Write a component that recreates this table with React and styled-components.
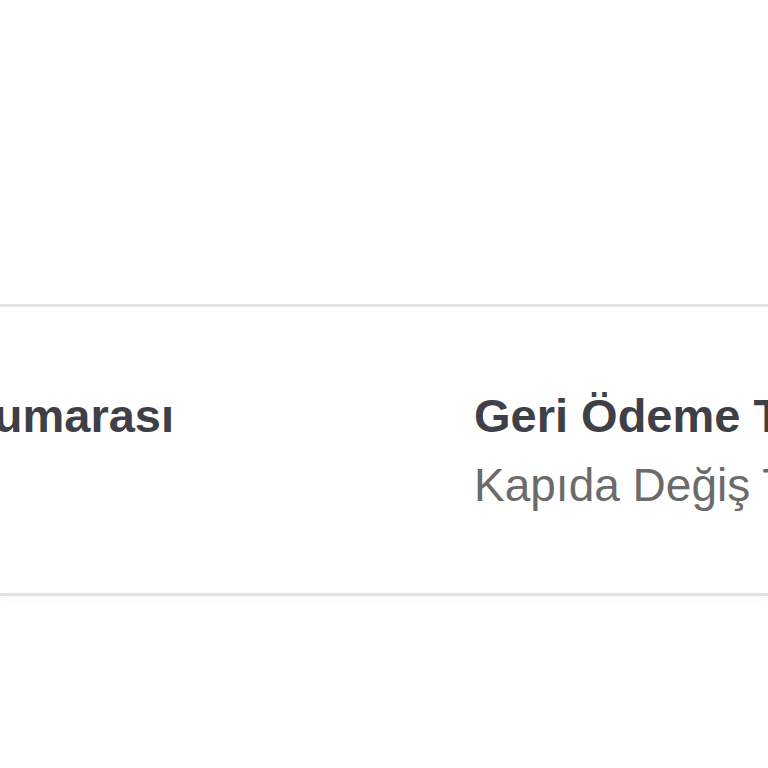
import React from "react";
import styled, { createGlobalStyle } from "styled-components";

const GlobalStyle = createGlobalStyle`
  html, body {
    margin: 0;
    padding: 0;
    background: #ffffff;
    overflow: hidden;
  }
`;

const Page = styled.div`
  width: 768px;
  height: 768px;
  padding-top: 304px;
  box-sizing: border-box;
  overflow: hidden;
  font-family: "Liberation Sans", Arial, sans-serif;
`;

const Row = styled.div`
  border-top: 3px solid #e3e3e3;
  border-bottom: 3px solid #e1e1e1;
  box-shadow: 0 3px 6px rgba(0, 0, 0, 0.03);
  padding: 81px 0 80px;
`;

const Columns = styled.div`
  display: grid;
  grid-template-columns: 684px 684px;
  margin-left: -210px;
  width: 1368px;
`;

const Cell = styled.div`
  display: flex;
  flex-direction: column;
  gap: 13px;
  white-space: nowrap;
`;

const Label = styled.div`
  font-size: 47px;
  line-height: 56px;
  font-weight: 700;
  color: #3f3f47;
`;

const Value = styled.div`
  font-size: 46px;
  line-height: 56px;
  font-weight: 400;
  color: #6b6b6b;
`;

const fields = [
  { label: "Sipariş Numarası", value: "" },
  { label: "Geri Ödeme Türü", value: "Kapıda Değiş Tokuş" },
];

export default function App() {
  return (
    <Page>
      <GlobalStyle />
      <Row>
        <Columns>
          {fields.map((f) => (
            <Cell key={f.label}>
              <Label>{f.label}</Label>
              <Value>{f.value || "\u00a0"}</Value>
            </Cell>
          ))}
        </Columns>
      </Row>
    </Page>
  );
}
